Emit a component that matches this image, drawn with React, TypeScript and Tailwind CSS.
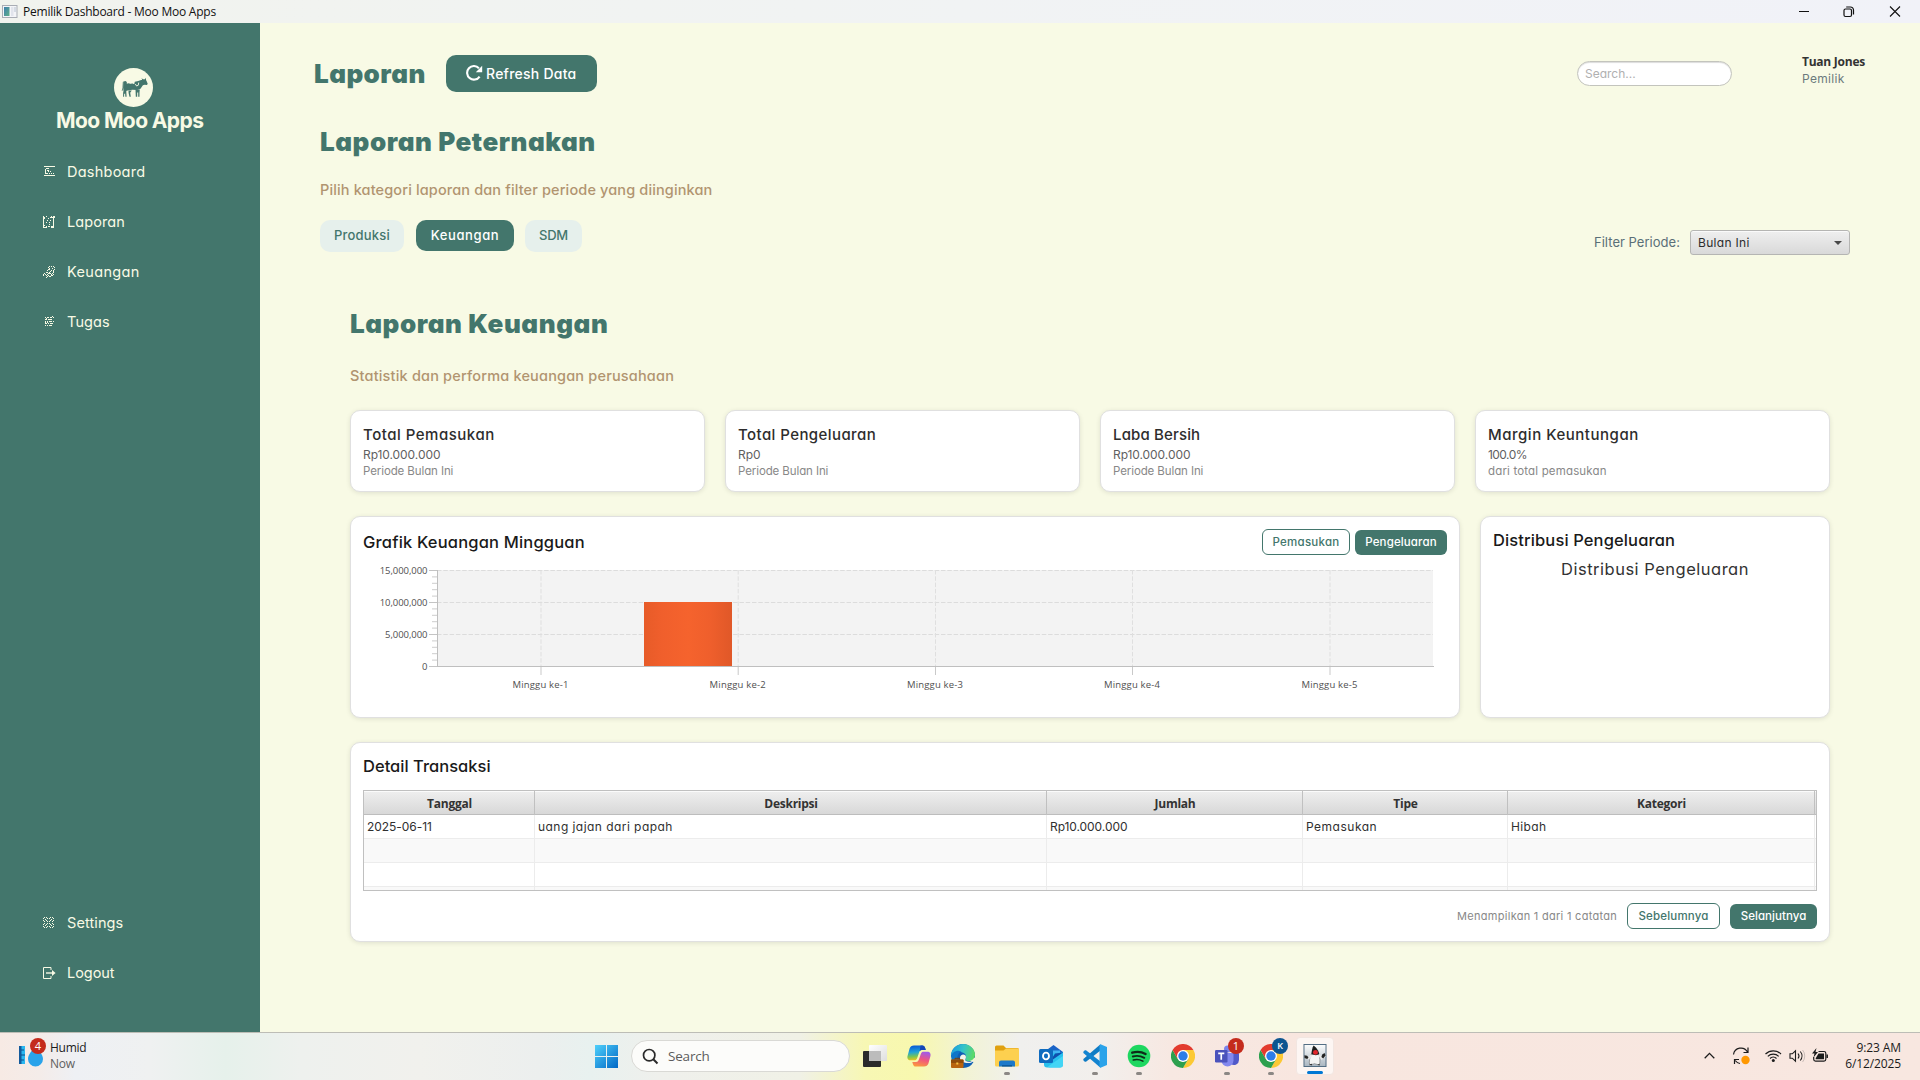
import type { ReactNode } from 'react'

const UI = "font-['Open_Sans',sans-serif]"

/* Small pixel icons of the sidebar, one string per pixel row. */
const pixelIcons: Record<string, string[]> = {
  dashboard: [
    ' XXXXXXXXXXX',
    '            ',
    '   XXX      ',
    '  X         ',
    '  X XX      ',
    '  X  X X    ',
    '  X         ',
    '  XXX X X X ',
    '            ',
    ' XXXXXXXXXXX',
  ],
  laporan: [
    'X  X    X XX',
    'XX     XXXXX',
    'XX   X    X ',
    'X         X ',
    'X   X  X  X ',
    'X         X ',
    'X  X  X   X ',
    'X         X ',
    'X     X   X ',
    'XX        X ',
    'X  X XX XXX ',
    'XXXX    XXX ',
  ],
  keuangan: [
    '      X X X ',
    '     X     X',
    '      X  X  ',
    '     XX    X',
    '    X   X X ',
    '       X  X ',
    '   XX X   X ',
    ' X   XXX X  ',
    'X X X   X X ',
    'X  X X  XX  ',
    '    X XX    ',
    '   X        ',
  ],
  tugas: [
    '         X  ',
    '  X XX XX X ',
    '   X        ',
    '  XX XXXX   ',
    '            ',
    '  X X XXX X ',
    '  X X       ',
    '  XX X XXX  ',
    '            ',
    '  X X XXX   ',
  ],
  settings: [
    ' X X   X X  ',
    'X   X X   X ',
    '  X     X   ',
    'X  X   X  X ',
    ' X  X X  X  ',
    '            ',
    ' X  X X  X  ',
    'X  X   X  X ',
    '  X     X   ',
    'X   X X   X ',
    ' X X   X X  ',
  ],
}

function PixelIcon({ name }: { name: string }) {
  const rows = pixelIcons[name]
  return (
    <svg width="12" height="12" viewBox="0 0 12 12" fill="#f8fae5" shapeRendering="crispEdges">
      {rows.flatMap((row, y) =>
        [...row].map((c, x) => (c === 'X' ? <rect key={`${x}-${y}`} x={x} y={y} width="1" height="1" /> : null)),
      )}
    </svg>
  )
}

function LogoutIcon() {
  return (
    <svg width="13" height="12" viewBox="0 0 13 12" fill="none" stroke="#f8fae5" strokeWidth="1">
      <path d="M8 3V.5H.5v11H8V9" />
      <path d="M3 6h7" strokeWidth="1.4" />
      <path d="M9 3l3.6 3L9 9z" fill="#f8fae5" stroke="none" />
    </svg>
  )
}

function NavItem({ icon, label, track }: { icon: ReactNode; label: string; track: string }) {
  return (
    <div className="flex h-[50px] items-center pl-[43px]">
      <span className="w-[24px]">{icon}</span>
      <span className={`text-[14.5px] leading-[20px] text-[#f8fae5] ${track}`}>{label}</span>
    </div>
  )
}

function CowLogo() {
  return (
    <svg width="39" height="39" viewBox="0 0 39 39">
      <circle cx="19.5" cy="19.5" r="19.5" fill="#f8fae5" />
      <g fill="#43766c">
        <path d="M9.500 13.500l2-.6 1.300 1.200v1.600l1.700-.4 1.800.5 2.300-.3 1.600.8.6-2.600 3.400-.6 2.900-1.200h1.200l-.9-1.600 1.900.9 1.600.1 1.100-1.600v2.200l.7 1.400 1 2.400-.7 1.300-2.300-.3-1.800.5-1.400 2-1 1.600-3.400 1.200-4.600-.3-3.600.6-2.400.4-2.900-.2-.5-3z" />
        <path d="M10 20.500h3.200l-.9 2.800.3 5.500h-1.200l-.3-3.500-1 1v2.500h-1V25z" />
        <path d="M14.500 22.500h3.300l-1.600 2.300.6 4h-1.300l-.9-3.800z" />
        <path d="M21.500 21.500h4.300l-.3 3v4.300h-1.300v-4.300h-1v4.300h-1.400z" />
      </g>
      <path d="M14 13.200l2.300 1.500 2.400-.4 1.300-1M21.300 16l1.300 2 1.700-.8.400-2.600" fill="none" stroke="#f8fae5" strokeWidth=".9" />
      <path d="M9.300 13.800l-.4 6-.7 3" fill="none" stroke="#43766c" strokeWidth=".8" />
    </svg>
  )
}

function Sidebar() {
  return (
    <aside className="flex w-[260px] shrink-0 flex-col bg-[#43766c]">
      <div className="mt-[45px] flex flex-col pl-[114px]">
        <CowLogo />
      </div>
      <div className="mt-[2px] pl-[56px] text-[21px] leading-[24px] font-bold tracking-[-0.6px] text-[#f8fae5]">Moo Moo Apps</div>
      <nav className="mt-[14px] flex flex-col">
        <NavItem icon={<PixelIcon name="dashboard" />} label="Dashboard" track="tracking-[0.24px]" />
        <NavItem icon={<PixelIcon name="laporan" />} label="Laporan" track="tracking-[0.08px]" />
        <NavItem icon={<PixelIcon name="keuangan" />} label="Keuangan" track="tracking-[0.34px]" />
        <NavItem icon={<PixelIcon name="tugas" />} label="Tugas" track="tracking-[0.1px]" />
      </nav>
      <div className="mt-auto mb-[34px] flex flex-col">
        <NavItem icon={<PixelIcon name="settings" />} label="Settings" track="tracking-[0.1px]" />
        <NavItem icon={<LogoutIcon />} label="Logout" track="tracking-[-0.05px]" />
      </div>
    </aside>
  )
}

function TitleBar() {
  return (
    <div className="flex h-[23px] items-center bg-linear-to-r from-[#f1f3ee] via-[#f1f3f4] to-[#f1f2f8] pl-[2px]">
      <svg width="16" height="15" viewBox="0 0 16 15">
        <defs>
          <linearGradient id="app" x1="0" y1="0" x2="1" y2="1">
            <stop offset="0" stopColor="#3f7fae" />
            <stop offset="1" stopColor="#5fb088" />
          </linearGradient>
        </defs>
        <rect x=".5" y="1.5" width="14.5" height="12" fill="#f4f5f8" stroke="#a9adb5" />
        <rect x="2" y="3" width="5.5" height="9" fill="url(#app)" />
        <rect x="9" y="3" width="2.5" height="9" fill="#e1e4ec" />
        <rect x="12" y="3" width="2" height="5" fill="#d5dbe4" />
      </svg>
      <span className={`${UI} ml-[5px] text-[12px] leading-[16px] tracking-[-0.23px] text-[#111]`}>Pemilik Dashboard - Moo Moo Apps</span>
      <svg className="mr-[19px] ml-auto" width="102" height="12" viewBox="0 0 102 12" fill="none" stroke="#111" strokeWidth="1">
        <path d="M0 5.5h10" />
        <rect x="45" y="3" width="7.5" height="7.5" rx="1.5" strokeWidth="1.2" />
        <path d="M47.2 1h4.3a3 3 0 0 1 3 3v4.5" strokeWidth="1.2" />
        <path d="M91 .5l10 10M101 .5l-10 10" strokeWidth="1.1" />
      </svg>
    </div>
  )
}

function HeaderRow() {
  return (
    <header className="mt-[32px] flex h-[37px] items-center pl-[54px]">
      <h1 className="w-[132px] text-[26px] leading-[32px] font-black tracking-[0.45px] text-[#43766c]">Laporan</h1>
      <button className="flex h-[37px] w-[151px] items-center rounded-[10px] bg-[#43766c] pl-[20px] text-[14px] font-medium tracking-[0.25px] text-white">
        <svg width="17" height="17" viewBox="0 0 17 17" className="mr-[3px]">
          <path d="M13.6 11.6A6.8 6.8 0 1 1 12.9 3.2" fill="none" stroke="#fff" strokeWidth="2.1" />
          <path d="M16.2.8v6.4H9.8z" fill="#fff" />
        </svg>
        Refresh Data
      </button>
      <div className="mr-[70px] ml-auto flex h-[25px] w-[155px] items-center rounded-full border border-[#c3c4bd] bg-white pl-[7px] text-[12px] text-[#b0b0b0] shadow-[inset_0_1px_1px_#dcdcdc]">
        Search...
      </div>
      <div className="mb-[7px] w-[118px] text-[12px]">
        <div className={`${UI} leading-[17px] font-bold tracking-[-0.25px] text-[#333]`}>Tuan Jones</div>
        <div className="leading-[17px] tracking-[0.3px] text-[#6c7a7d]">Pemilik</div>
      </div>
    </header>
  )
}

function Filters() {
  return (
    <section className="mt-[34px] pl-[60px]">
      <h2 className="text-[26px] leading-[32px] font-black tracking-[0.54px] text-[#43766c]">Laporan Peternakan</h2>
      <p className="mt-[22px] text-[14.5px] leading-[20px] font-medium tracking-[0.13px] text-[#b19470]">
        Pilih kategori laporan dan filter periode yang diinginkan
      </p>
      <div className="mt-[19px] flex h-[36px] items-start pr-[70px] text-[13px] font-medium text-[#43766c]">
        <button className="mt-[1px] h-[32px] w-[84px] rounded-[10px] bg-[#e6f0ec] tracking-[0.2px]">Produksi</button>
        <button className="mt-[1px] ml-[12px] h-[31px] w-[98px] rounded-[10px] bg-[#43766c] pt-px tracking-[0.6px] text-white">Keuangan</button>
        <button className="mt-[1px] ml-[11px] h-[32px] w-[57px] rounded-[10px] bg-[#e6f0ec] tracking-[-0.15px]">SDM</button>
        <div className="mt-[11px] ml-auto flex items-center font-normal">
          <span className="mr-[10px] tracking-[0.03px] text-[#5a6f78]">Filter Periode:</span>
          <div className="flex h-[25px] w-[160px] items-center justify-between rounded-[3px] border border-[#b5b5b3] bg-linear-to-b from-[#efefef] to-[#d9d9d9] pr-[7px] pl-[7px] text-[12px] tracking-[0.3px] text-[#2c2c2c] shadow-[inset_0_1px_0_#fafafa]">
            Bulan Ini
            <svg width="8" height="4" viewBox="0 0 8 4"><path d="M0 0h8L4 4z" fill="#494949" /></svg>
          </div>
        </div>
      </div>
    </section>
  )
}

const cardBox = 'rounded-[10px] border border-[#e0e0e0] bg-white shadow-[0_1px_5px_rgba(0,0,0,0.1)]'

const stats = [
  { title: 'Total Pemasukan', value: 'Rp10.000.000', note: 'Periode Bulan Ini', t: 'tracking-[0.51px]', v: 'tracking-[-0.07px]', n: 'tracking-[-0.1px]' },
  { title: 'Total Pengeluaran', value: 'Rp0', note: 'Periode Bulan Ini', t: 'tracking-[0.42px]', v: 'tracking-[0px]', n: 'tracking-[-0.1px]' },
  { title: 'Laba Bersih', value: 'Rp10.000.000', note: 'Periode Bulan Ini', t: 'tracking-[0.15px]', v: 'tracking-[-0.07px]', n: 'tracking-[-0.1px]' },
  { title: 'Margin Keuntungan', value: '100.0%', note: 'dari total pemasukan', t: 'tracking-[0.52px]', v: 'tracking-[-0.55px]', n: 'tracking-[0.16px]' },
]

const yTicks = [
  { y: 5.5, label: '15,000,000' },
  { y: 37.5, label: '10,000,000' },
  { y: 69.5, label: '5,000,000' },
  { y: 101.5, label: '0' },
]
const minorTicks = [0, 1, 2].flatMap((g) => [1, 2, 3, 4].map((i) => 5.5 + g * 32 + i * 6.4))
const xTicks = [179, 376.2, 573.5, 770.5, 968]

function Chart() {
  return (
    <svg width="1085" height="135" viewBox="0 0 1085 135" className="block font-['Open_Sans',sans-serif]">
      <defs>
        <linearGradient id="bar">
          <stop offset="0" stopColor="#e75b28" />
          <stop offset=".2" stopColor="#f05f2c" />
          <stop offset=".5" stopColor="#f5632d" />
          <stop offset=".75" stopColor="#ef5f2c" />
          <stop offset="1" stopColor="#e05828" />
        </linearGradient>
      </defs>
      <rect x="75" y="5" width="996" height="97" fill="#f3f3f3" />
      {yTicks.slice(0, 3).map((t) => (
        <path key={t.label} d={`M75 ${t.y}H1071`} stroke="#dcdcdc" strokeDasharray="4.5 1.8" />
      ))}
      {xTicks.map((x) => (
        <path key={x} d={`M${x} 5V101`} stroke="#dfdfdf" strokeDasharray="4.5 1.8" />
      ))}
      <rect x="282" y="37" width="88" height="64" fill="url(#bar)" />
      <path d="M75.5 5V102M75 101.5H1072" stroke="#bfbfbf" />
      {yTicks.map((t) => (
        <g key={t.label}>
          <path d={`M67 ${t.y}h8`} stroke="#c4c4c4" />
          <text x="65.5" y={t.y + 3.5} textAnchor="end" fontSize="9.5" letterSpacing="-.05" fill="#505050">{t.label}</text>
        </g>
      ))}
      {minorTicks.map((y) => (
        <path key={y} d={`M70 ${y}h5`} stroke="#cdcdcd" />
      ))}
      {xTicks.map((x, i) => (
        <g key={x}>
          <path d={`M${x} 102v8`} stroke="#c9c9c9" />
          <text x={x - 0.5} y="123.3" textAnchor="middle" fontSize="9.5" letterSpacing=".18" fill="#505050">{`Minggu ke-${i + 1}`}</text>
        </g>
      ))}
    </svg>
  )
}

function OutlineButton({ children, className }: { children: ReactNode; className: string }) {
  return <button className={`h-[26px] rounded-[6px] border border-[#43766c] bg-white pt-px font-medium text-[#43766c] ${className}`}>{children}</button>
}
function SolidButton({ children, className }: { children: ReactNode; className: string }) {
  return <button className={`h-[25px] rounded-[6px] bg-[#43766c] font-medium text-white ${className}`}>{children}</button>
}

const columns = 'grid grid-cols-[171px_512px_256px_205px_307px_1fr]'

function TransactionTable() {
  const heads = ['Tanggal', 'Deskripsi', 'Jumlah', 'Tipe', 'Kategori']
  const cells: [string, string][] = [
    ['2025-06-11', 'tracking-[-0.05px]'],
    ['uang jajan dari papah', 'tracking-[0.45px]'],
    ['Rp10.000.000', 'tracking-[-0.07px]'],
    ['Pemasukan', 'tracking-[0.5px]'],
    ['Hibah', 'tracking-[0.4px]'],
  ]
  return (
    <div className="h-[101px] w-[1454px] overflow-hidden border border-[#c0c0c0] text-[12px]">
      <div className={`${columns} ${UI} h-[24px] border-b border-[#bdbdbd] bg-linear-to-b from-[#efefef] to-[#d8d8d8] text-center leading-[24px] font-bold text-[#333] shadow-[inset_0_1px_0_#fbfbfb]`}>
        {heads.map((h) => (
          <div key={h} className="border-r border-[#c0c0c0] pt-px pl-[1px] tracking-[-0.25px]">{h}</div>
        ))}
      </div>
      <div className={`${columns} h-[24px] border-b border-[#ececec] leading-[23px] text-[#2f2f2f]`}>
        {cells.map(([c, t]) => (
          <div key={c} className={`border-r border-[#ececec] pl-[3px] ${t}`}>{c}</div>
        ))}
      </div>
      {['bg-[#f9f9f9]', 'bg-white', 'bg-[#f9f9f9]'].map((bg, i) => (
        <div key={i} className={`${columns} ${bg} h-[24px] border-b border-[#ececec]`}>
          {heads.map((h) => (
            <div key={h} className="border-r border-[#ececec]" />
          ))}
        </div>
      ))}
    </div>
  )
}

function Report() {
  return (
    <section className="mt-[53px] w-[1570px] pl-[90px]">
      <h2 className="text-[26px] leading-[32px] font-black tracking-[0.56px] text-[#43766c]">Laporan Keuangan</h2>
      <p className="mt-[26px] text-[14.5px] leading-[20px] font-medium tracking-[0.18px] text-[#b19470]">Statistik dan performa keuangan perusahaan</p>
      <div className="mt-[24px] grid grid-cols-4 gap-[20px]">
        {stats.map((s) => (
          <div key={s.title} className={`${cardBox} h-[82px] pt-[14px] pl-[12px]`}>
            <div className={`text-[15px] leading-[20px] font-medium text-[#2d2d2d] ${s.t}`}>{s.title}</div>
            <div className={`mt-[2px] text-[12px] leading-[16px] text-[#5f5f5f] ${s.v}`}>{s.value}</div>
            <div className={`text-[11.5px] leading-[17px] text-[#888] ${s.n}`}>{s.note}</div>
          </div>
        ))}
      </div>
      <div className="mt-[24px] flex gap-[20px]">
        <div className={`${cardBox} h-[202px] w-[1110px] pl-[11px]`}>
          <div className="mt-[12px] flex h-[26px] items-end pr-[12px] text-[11.5px]">
            <h3 className="mr-auto ml-px text-[16.5px] leading-[26px] font-medium tracking-[0.18px] text-[#1a1a1a]">Grafik Keuangan Mingguan</h3>
            <OutlineButton className="w-[88px] tracking-[0.25px]">Pemasukan</OutlineButton>
            <SolidButton className="ml-[5px] w-[92px] tracking-[0.12px]">Pengeluaran</SolidButton>
          </div>
          <div className="mt-[10px]">
            <Chart />
          </div>
        </div>
        <div className={`${cardBox} h-[202px] w-[350px] pt-[12px]`}>
          <h3 className="pl-[12px] text-[16.5px] leading-[22px] font-medium tracking-[0.12px] text-[#1a1a1a]">Distribusi Pengeluaran</h3>
          <div className="mt-[7px] text-center text-[16.5px] leading-[22px] tracking-[0.5px] text-[#333]">Distribusi Pengeluaran</div>
        </div>
      </div>
      <div className={`${cardBox} mt-[24px] h-[200px] pt-[12px] pl-[12px]`}>
        <h3 className="text-[16.5px] leading-[22px] font-medium tracking-[0.02px] text-[#1a1a1a]">Detail Transaksi</h3>
        <div className="mt-[13px]">
          <TransactionTable />
        </div>
        <div className="mt-[12px] flex w-[1454px] items-end justify-end text-[11.5px]">
          <span className="mr-[10px] text-[11px] leading-[26px] tracking-[0.28px] text-[#888]">Menampilkan 1 dari 1 catatan</span>
          <OutlineButton className="w-[93px] tracking-[0.18px]">Sebelumnya</OutlineButton>
          <SolidButton className="ml-[10px] w-[87px] tracking-[0.05px]">Selanjutnya</SolidButton>
        </div>
      </div>
    </section>
  )
}

function StartIcon() {
  return (
    <svg width="24" height="24" viewBox="0 0 24 24">
      <defs>
        <linearGradient id="win" x1="0" y1="0" x2="1" y2="1">
          <stop offset="0" stopColor="#4fd0fb" />
          <stop offset="1" stopColor="#0067c5" />
        </linearGradient>
      </defs>
      <path d="M0 0h11v11H0zM12 0h11v11H12zM0 12h11v11H0zM12 12h11v11H12z" fill="url(#win)" />
    </svg>
  )
}

function TaskViewIcon() {
  return (
    <svg width="24" height="24" viewBox="0 0 24 24">
      <defs>
        <linearGradient id="tv" x1="0" y1="0" x2="1" y2="1">
          <stop offset="0" stopColor="#ffffff" />
          <stop offset="1" stopColor="#dedede" />
        </linearGradient>
      </defs>
      <rect x="0" y="7" width="18" height="16" rx="1" fill="#2a2a2a" />
      <rect x="6" y="1" width="18" height="16" rx="1" fill="url(#tv)" />
      <rect x="6" y="7" width="12" height="10" fill="#bcbcbc" />
    </svg>
  )
}

function CopilotIcon() {
  return (
    <svg width="24" height="24" viewBox="0 0 24 24">
      <defs>
        <linearGradient id="cpa" x1=".3" y1="0" x2=".4" y2="1">
          <stop offset="0" stopColor="#0a58d6" />
          <stop offset=".45" stopColor="#1fa3d8" />
          <stop offset=".75" stopColor="#7cc650" />
          <stop offset="1" stopColor="#f0c419" />
        </linearGradient>
        <linearGradient id="cpb" x1=".6" y1="0" x2=".3" y2="1">
          <stop offset="0" stopColor="#a05be8" />
          <stop offset=".5" stopColor="#f0567f" />
          <stop offset="1" stopColor="#fb9a3c" />
        </linearGradient>
      </defs>
      <path d="M7 1.5h8.2c1.6 0 2.4 1 2.9 2.600l.6 2H15c-1.700 0-2.500 1-3 2.600L10.200 14c-.5 1.700-1.400 2.300-3 2.300H3.500C.8 16.300 0 14 .6 11.700l2-7.200C3.300 2.400 4.700 1.500 7 1.500z" fill="url(#cpa)" />
      <path d="M13.500 1.500h2c1.500 0 2.300 1 2.700 2.600l.6 2H15c-1 0-1.800.5-2.300 1.200z" fill="#1546b8" />
      <path d="M17 22.500H8.800c-1.600 0-2.400-1-2.900-2.600l-.6-2H9c1.700 0 2.500-1 3-2.600l1.800-5.300c.5-1.700 1.400-2.300 3-2.300h3.700c2.700 0 3.500 2.300 2.900 4.600l-2 7.200c-.7 2.100-2.100 3-4.400 3z" fill="url(#cpb)" />
    </svg>
  )
}

function EdgeIcon() {
  return (
    <svg width="24" height="24" viewBox="0 0 24 24">
      <defs>
        <linearGradient id="eg" x1="0" y1=".3" x2="1" y2=".5">
          <stop offset="0" stopColor="#1b9de0" />
          <stop offset=".5" stopColor="#35c4c8" />
          <stop offset="1" stopColor="#5ddb62" />
        </linearGradient>
      </defs>
      <path d="M0 12a12 12 0 0 1 24 0c0 .8 0 1-.1 1.500L16 16l6.500 2A12 12 0 0 1 12 24z" fill="#0f5fb5" />
      <path d="M0 12C0 5 5.500 0 12 0s12 5 12 10.500c0 4-3 6.500-6.500 6.500-2.500 0-3.500-1-3-2 1-1.500 1-5.500-3-6.500C6.500 7.300 1.500 9 0 12z" fill="url(#eg)" />
      <path d="M9 14c0-3 3-4.500 5-3 1.500 1.300 1 3.200.3 4.200-.6 1.300 1.200 2.500 3.700 2.500 2 0 3.500-.6 4.600-1.500-1 2.200-2.600 2.800-5.600 2.800-4 0-8-1.500-8-5z" fill="#f2f4ea" />
      <path d="M0 12.500C1.200 7.500 6.500 5.500 10.500 7.500 7 8.500 5.500 13 7 17H1z" fill="#0f76c9" />
      <rect x="0" y="15.500" width="12.500" height="8.500" rx="1" fill="#b8640f" />
      <path d="M4 15.500v-1.200h4.500v1.200" fill="none" stroke="#7c4209" />
      <rect x="0" y="15.500" width="12.500" height="3.500" rx=".8" fill="#8f4c0b" />
      <rect x="5.300" y="18.500" width="2" height="2" fill="#f6c445" />
    </svg>
  )
}

function FolderIcon() {
  return (
    <svg width="24" height="24" viewBox="0 0 24 24">
      <path d="M0 3a1.500 1.500 0 0 1 1.500-1.500h7L11 4h11.500A1.500 1.500 0 0 1 24 5.500V9H0z" fill="#e0a10f" />
      <path d="M0 6.500h8.500L11 4.500h12a1 1 0 0 1 1 1V21a1.500 1.500 0 0 1-1.500 1.500h-21A1.500 1.500 0 0 1 0 21z" fill="#fdd04f" />
      <path d="M4 22.500V18.500a2 2 0 0 1 2-2h12a2 2 0 0 1 2 2v4z" fill="#1b79c9" />
      <path d="M7 22.500v-1.500h10v1.500z" fill="#0d5a9e" />
    </svg>
  )
}

function OutlookIcon() {
  return (
    <svg width="24" height="24" viewBox="0 0 24 24">
      <path d="M5 8l9.500-7L24 8v3H5z" fill="#1a63c7" />
      <path d="M8 6.500h13v8H8z" fill="#41b4f3" />
      <path d="M5 10l19-1.500v12a3 3 0 0 1-3 3H8a3 3 0 0 1-3-3z" fill="#28c1ee" />
      <path d="M24 8.500 11 17.500l5-8z" fill="#0f4fae" />
      <path d="M24 12 9 22.500l1 1h11a3 3 0 0 0 3-3z" fill="#43d5f5" />
      <rect x="0" y="5" width="14" height="14" rx="1.500" fill="#0f6bbf" />
      <ellipse cx="7" cy="12" rx="3" ry="3.400" fill="none" stroke="#fff" strokeWidth="1.900" />
    </svg>
  )
}

function CodeIcon() {
  return (
    <svg width="24" height="24" viewBox="0 0 24 24">
      <path d="M17.500 6.500 3 17.800l-1.200-.1-1.500-1.500.1-1.200L17.500.2z" fill="#0f7bc4" />
      <path d="M17.500 17.500 3 6.200l-1.200.1L.3 7.800.4 9l17.100 14.800z" fill="#1384d0" />
      <path d="M17.500.2 24 3v18l-6.500 2.800c-.6-.3-1-1-1-1.800V2c0-.8.400-1.500 1-1.800z" fill="#2ba3ea" />
    </svg>
  )
}

function SpotifyIcon() {
  return (
    <svg width="24" height="24" viewBox="0 0 24 24">
      <circle cx="12" cy="12" r="11.300" fill="#1ed760" />
      <g fill="none" stroke="#0e2a18" strokeLinecap="round">
        <path d="M5.200 8.700c4.300-1.300 9.500-.9 13.400 1.300" strokeWidth="2.300" />
        <path d="M5.800 12.500c3.700-1.100 8-.6 11.500 1.300" strokeWidth="1.900" />
        <path d="M6.300 16c3.200-.9 6.500-.5 9.600 1.100" strokeWidth="1.600" />
      </g>
    </svg>
  )
}

function ChromeIcon() {
  return (
    <svg width="24" height="24" viewBox="0 0 24 24">
      <path d="M12 6h10.400A12 12 0 0 1 12 24l5.200-9z" fill="#fcc934" />
      <path d="M12 24A12 12 0 0 1 1.600 6l5.200 9 5.200 3 5.200-3z" fill="#2da04e" />
      <path d="M1.600 6A12 12 0 0 1 22.400 6H12l-5.200 9z" fill="#e33b2e" />
      <circle cx="12" cy="12" r="6" fill="#fff" />
      <circle cx="12" cy="12" r="4.700" fill="#2b7de9" />
    </svg>
  )
}

function TeamsIcon() {
  return (
    <svg width="24" height="24" viewBox="0 0 24 24">
      <circle cx="12.500" cy="5" r="3.500" fill="#7b83eb" />
      <path d="M15 9h8a1 1 0 0 1 1 1v6a5 5 0 0 1-8 4z" fill="#5059c9" />
      <path d="M7 9h10.500a1 1 0 0 1 1 1v6.500a6 6 0 0 1-12 0V9z" fill="#8288ee" />
      <rect x="0" y="6" width="12.500" height="12.500" rx="1.200" fill="#4b53bc" />
      <path d="M3.200 9.300h6.100M6.250 9.300v6.500" stroke="#fff" strokeWidth="1.700" />
    </svg>
  )
}

function DukeIcon() {
  return (
    <svg width="24" height="24" viewBox="0 0 24 24">
      <defs>
        <linearGradient id="dk" x1="0" y1="0" x2="0" y2="1">
          <stop offset="0" stopColor="#fdfdfd" />
          <stop offset="1" stopColor="#a9b6c1" />
        </linearGradient>
      </defs>
      <rect x=".5" y=".5" width="23" height="23" fill="url(#dk)" stroke="#4f6a80" />
      <path d="M8 10.500c-1.500 3.500-2.500 8-1.500 11.500l5-1.500 5 1.500c1-3 .8-8-.5-11.500z" fill="#f4f4f4" stroke="#555" strokeWidth=".5" />
      <path d="M10.500 1.500c2.500 1.500 5.500 5.500 6 9.300l-3.500 1-4.800-1C8.500 7.500 9.200 3.500 10.500 1.500z" fill="#1d1d1d" />
      <path d="M8.500 11.500 5.500 15l-4-1.500M16 11l3 4 3.500-3" fill="none" stroke="#e8e8e8" strokeWidth="2.200" />
      <path d="M1 11.800l2.800.4 1.400 1.800-1.300 1.600L1 14.500zM19.500 11l2.500-1.500 1 2.500-2.500 3-1.800-1.500zM6 21.500l2.500-1 .5 2zM14.500 21l2.500 0-.5 1.500z" fill="#222" />
      <ellipse cx="12.500" cy="8.800" rx="2.600" ry="2.500" fill="#e0262c" />
    </svg>
  )
}

function TaskApp({ children, mark = false }: { children: ReactNode; mark?: boolean }) {
  return (
    <div className="flex w-[44px] flex-col items-center pt-[11px]">
      {children}
      {mark && <div className="mt-[4px] h-[3px] w-[6px] rounded-full bg-[#8b8784]" />}
    </div>
  )
}

function Tray() {
  return (
    <svg width="124" height="22" viewBox="0 0 124 22" fill="none" stroke="#1c1c1c">
      <path d="M.7 13.200 5.500 8.400l4.800 4.800" strokeWidth="1.300" />
      <path d="M29.500 9.500A7.500 7.500 0 0 1 43.500 7M44 2.500v5H39.500M36 18.500c-2-.3-3.500-1.300-4.800-3M30.500 19v-4.500H35" strokeWidth="1.200" />
      <circle cx="41.500" cy="15" r="4.200" fill="#ff9800" stroke="none" />
      <path d="M61.500 9a11 11 0 0 1 15.500 0M63.800 11.300a7.700 7.700 0 0 1 10.900 0M66 13.500a4.600 4.600 0 0 1 6.500 0" strokeWidth="1.200" />
      <circle cx="69.300" cy="15.500" r="1.500" fill="#1c1c1c" stroke="none" />
      <path d="M86 8.800h2.300l3.200-3v10.400l-3.200-3H86z" strokeWidth="1.100" />
      <path d="M94 8.500a4 4 0 0 1 0 5M96.300 6.500a7 7 0 0 1 0 9" strokeWidth="1.100" />
      <path d="M98.600 5a9.500 9.500 0 0 1 0 12" strokeWidth="1" stroke="#c9bdb8" />
      <path d="M114.500 6.500H120a1.800 1.800 0 0 1 1.800 1.800v6a1.800 1.800 0 0 1-1.800 1.800h-8.500a1.800 1.800 0 0 1-1.800-1.800V12" strokeWidth="1.200" />
      <path d="M114.500 8.500h5.500v5.800h-8.300v-1z" fill="#1c1c1c" stroke="none" />
      <path d="M123.200 9.500v3.500" strokeWidth="1.500" />
      <path d="M112.500 3l-4.500 5.500h2.500L109.500 12.500l4.500-5.500h-2.500z" fill="#1c1c1c" stroke="none" />
    </svg>
  )
}

function Taskbar() {
  return (
    <footer
      className={`${UI} flex h-[48px] border-t border-[#bdbdb6] bg-[linear-gradient(90deg,#f7eae4_0px,#f4ece9_40px,#eef0f4_75px,#eff1f1_150px,#e6f1eb_225px,#eef1ee_300px,#f1f1ed_420px,#ecefee_540px,#e8f1ef_590px,#eff0ec_660px,#f0f1e6_800px,#f7f7b4_865px,#f8f8ae_915px,#f2f3d4_965px,#f0f0ee_1020px,#f2efec_1100px,#f7e8e2_1170px,#f8e6df_1300px,#f8e7e0_1920px)]`}
    >
      <div className="flex w-[595px] pl-[19px]">
        <div className="relative mt-[5px] h-[36px] w-[31px]">
          <svg width="31" height="34" viewBox="0 0 31 34">
            <rect x="0" y="8" width="6" height="18" fill="#2ab7f0" />
            <rect x="0" y="8" width="2.500" height="18" fill="#135a9c" />
            <path d="M2 12h3M2 17h4M2 22h3" stroke="#0f4f8c" />
            <path d="M16.500 8c3 4.500 7.500 8 7.500 13a7.500 7.500 0 0 1-15 0c0-5 4.500-8.500 7.500-13z" fill="#2aa3ea" />
            <circle cx="19" cy="8" r="8" fill="#c42b1c" />
          </svg>
          <span className="absolute top-0 left-[11px] w-[16px] text-center text-[11px] leading-[16px] text-white">4</span>
        </div>
        <div className="mt-[7px] text-[12px] leading-[16px] tracking-[-0.25px] text-[#1b1b1b]">
          <div>Humid</div>
          <div className="text-[#5f5f5f]">Now</div>
        </div>
      </div>
      <div className="mt-[12px] w-[36px]">
        <StartIcon />
      </div>
      <div className="mt-[7px] mr-[4px] flex h-[32px] w-[219px] items-center rounded-full border border-[#d9d9d5] bg-[#fcfcfa] pl-[10px] text-[13.5px] tracking-[-0.2px] text-[#5c5c5c]">
        <svg width="17" height="17" viewBox="0 0 17 17" fill="none" stroke="#2a2a2a" className="mr-[9px]">
          <circle cx="7.200" cy="7.200" r="5.700" strokeWidth="1.700" />
          <path d="M11.300 11.300 15.500 15.500" strokeWidth="2" />
        </svg>
        Search
      </div>
      <div className="-ml-px flex">
        <TaskApp><TaskViewIcon /></TaskApp>
        <TaskApp><CopilotIcon /></TaskApp>
        <TaskApp><EdgeIcon /></TaskApp>
        <TaskApp mark><FolderIcon /></TaskApp>
        <TaskApp><OutlookIcon /></TaskApp>
        <TaskApp mark><CodeIcon /></TaskApp>
        <TaskApp mark><SpotifyIcon /></TaskApp>
        <TaskApp><ChromeIcon /></TaskApp>
        <TaskApp mark>
          <div className="relative">
            <TeamsIcon />
            <span className="absolute -top-[6px] left-[13px] h-[16px] w-[16px] rounded-full bg-[#c42b1c] text-center text-[11px] leading-[16px] text-white">1</span>
          </div>
        </TaskApp>
        <TaskApp mark>
          <div className="relative">
            <ChromeIcon />
            <span className="absolute -top-[6px] left-[13px] h-[16px] w-[16px] rounded-full bg-[#0c5590] text-center text-[9px] leading-[16px] font-semibold text-white">K</span>
          </div>
        </TaskApp>
        <div className="mt-[4px] ml-[3px] flex h-[38px] w-[38px] flex-col items-center rounded-[4px] border border-[#f2e6e1] bg-[#fdf6f3] pt-[6px]">
          <DukeIcon />
          <div className="mt-[4px] h-[3px] w-[16px] shrink-0 rounded-full bg-[#0078d4]" />
        </div>
      </div>
      <div className="mt-[12px] mr-[26px] ml-auto">
        <Tray />
      </div>
      <div className="mt-[7px] mr-[19px] w-[47px] text-right text-[12px] leading-[16px] tracking-[-0.12px] whitespace-nowrap text-[#1b1b1b]">
        <div>9:23 AM</div>
        <div className="-ml-[20px]">6/12/2025</div>
      </div>
    </footer>
  )
}

export default function App() {
  return (
    <div className="flex h-[1080px] w-[1920px] flex-col overflow-hidden bg-[#f8fae5] font-['Inter',sans-serif] [font-feature-settings:'cv11']">
      <TitleBar />
      <div className="flex h-[1009px]">
        <Sidebar />
        <main className="w-[1660px]">
          <HeaderRow />
          <Filters />
          <Report />
        </main>
      </div>
      <Taskbar />
    </div>
  )
}
